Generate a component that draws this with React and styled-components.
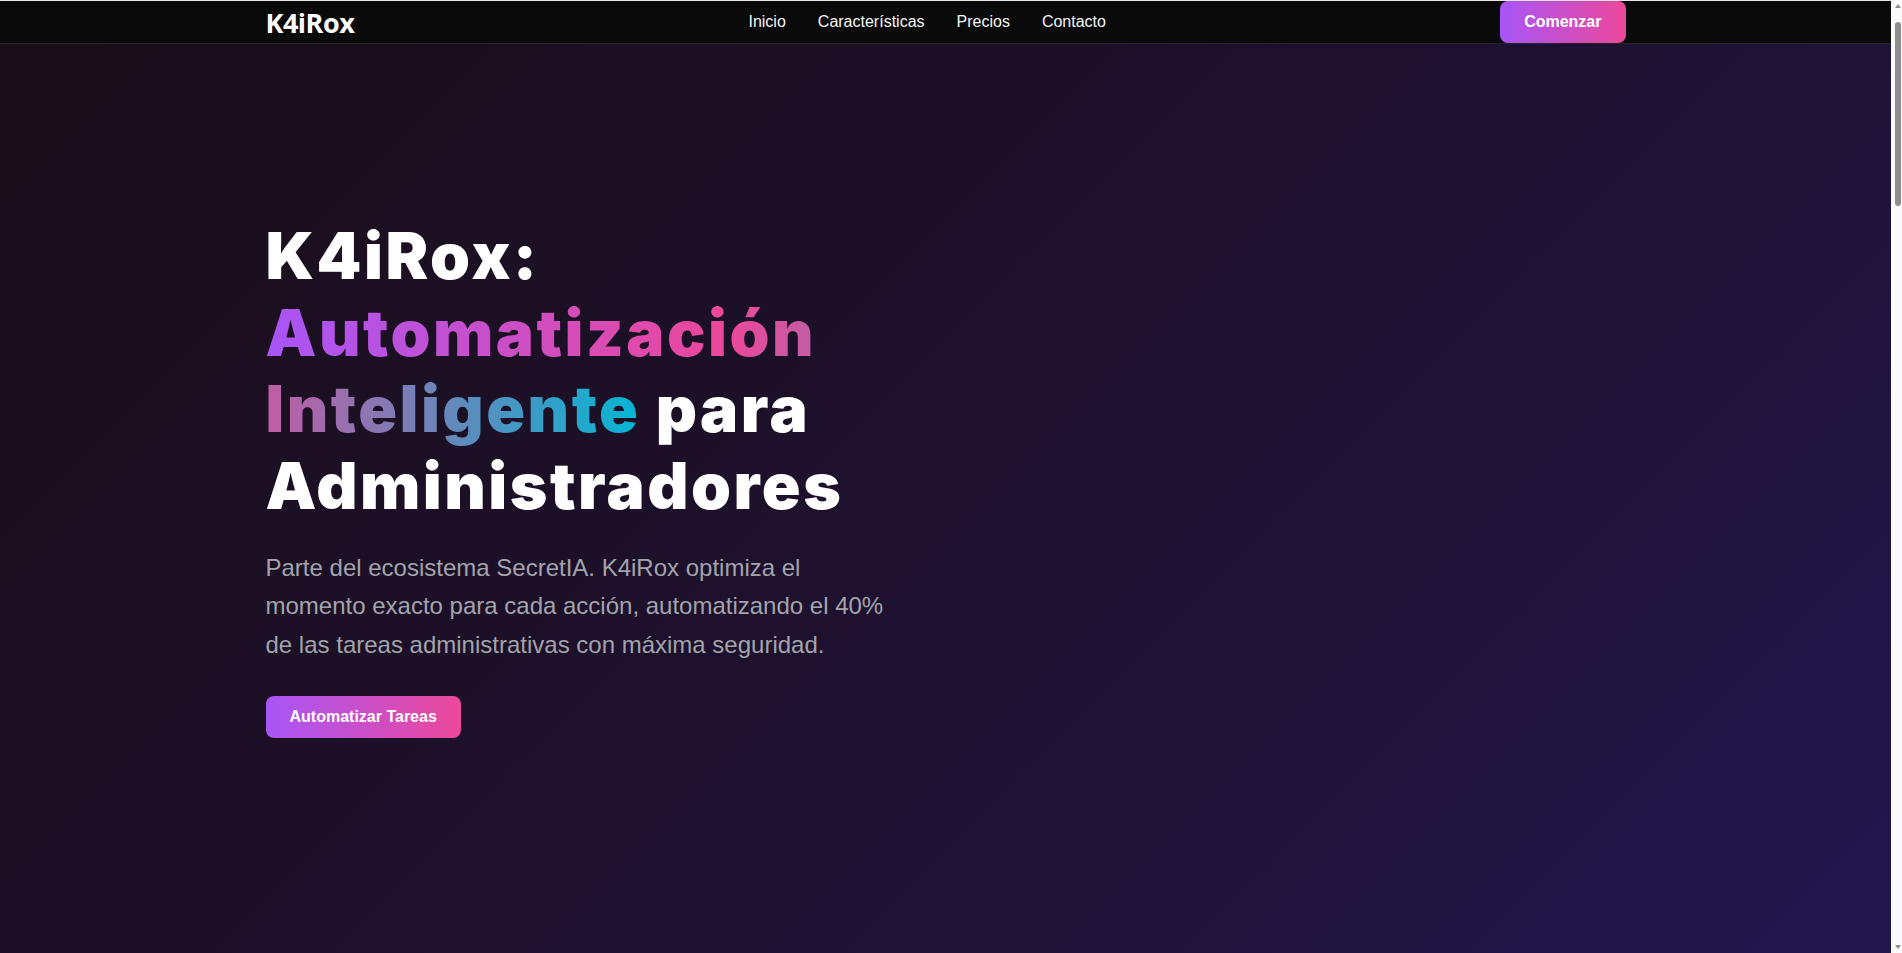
import React from "react";
import styled, { createGlobalStyle } from "styled-components";

const SCROLLBAR = 11;

const GlobalStyle = createGlobalStyle`
  *, *::before, *::after { box-sizing: border-box; }
  html, body { margin: 0; padding: 0; }
  html { background: #fafafa; }
  body {
    margin-right: ${SCROLLBAR}px;
    background: #0a0a0a;
    color: #ffffff;
    font-family: "Liberation Sans", Arial, sans-serif;
  }
`;

const Nav = styled.header`
  position: fixed;
  top: 0;
  left: 0;
  right: ${SCROLLBAR}px;
  z-index: 10;
  background: #0a0a0a;
  border-top: 1px solid #e6e6e6;
  border-bottom: 1px solid #242424;
`;

const Container = styled.div`
  width: 100%;
  max-width: 1400px;
  margin: 0 auto;
  padding: 0 20px;
`;

const NavBar = styled(Container)`
  display: flex;
  align-items: center;
  justify-content: space-between;
`;

const Logo = styled.a`
  font-family: "Open Sans", "Noto Sans", sans-serif;
  font-weight: 700;
  font-size: 27px;
  letter-spacing: -0.5px;
  color: #ffffff;
  text-decoration: none;
  line-height: 1;
`;

const Links = styled.nav`
  display: flex;
  gap: 32px;
`;

const NavLink = styled.a`
  font-family: "Liberation Sans", Arial, sans-serif;
  font-size: 16px;
  color: #f5f5f5;
  text-decoration: none;
`;

const GradientButton = styled.a`
  display: inline-block;
  padding: 12px 24px;
  border-radius: 8px;
  background: linear-gradient(90deg, #a855f7 0%, #ec4899 100%);
  color: #ffffff;
  font-family: "Liberation Sans", Arial, sans-serif;
  font-weight: 700;
  font-size: 16px;
  line-height: 18px;
  text-decoration: none;
  white-space: nowrap;
`;

const Hero = styled.section`
  min-height: 100vh;
  display: flex;
  align-items: center;
  padding-top: 3px;
  background: linear-gradient(135deg, #1a0f17 0%, #1c1029 40%, #1f1338 70%, #22164f 100%);
`;

const HeroContent = styled.div`
  max-width: 630px;
`;

const Title = styled.h1`
  margin: 0 0 24px;
  font-family: "Inter", "Liberation Sans", sans-serif;
  font-weight: 900;
  font-size: 64px;
  line-height: 1.2;
  letter-spacing: 2.5px;
  color: #ffffff;
`;

const GradientText = styled.span`
  background: linear-gradient(90deg, #a855f7 0%, #ec4899 50%, #06b6d4 100%);
  -webkit-background-clip: text;
  background-clip: text;
  color: transparent;
`;

const Lead = styled.p`
  margin: 0 0 32px;
  font-family: "Liberation Sans", Arial, sans-serif;
  font-size: 24px;
  line-height: 1.6;
  color: #a3a3ab;
`;

const Section = styled.section`
  min-height: 100vh;
  padding: 120px 0;
  background: ${(p) => (p.$alt ? "#120b1f" : "#0d0814")};
`;

const SectionTitle = styled.h2`
  margin: 0 0 24px;
  font-family: "Inter", "Liberation Sans", sans-serif;
  font-weight: 800;
  font-size: 44px;
  color: #ffffff;
`;

const SectionText = styled.p`
  margin: 0;
  max-width: 720px;
  font-size: 20px;
  line-height: 1.6;
  color: #a3a3ab;
`;

const Footer = styled.footer`
  padding: 40px 0;
  background: #0a0a0a;
  border-top: 1px solid #242424;
  color: #71717a;
  font-size: 14px;
`;

/* Window scrollbar, drawn over the right edge */
const ScrollTrack = styled.div`
  position: fixed;
  top: 0;
  right: 0;
  bottom: 0;
  width: ${SCROLLBAR}px;
  z-index: 20;
  background: #fafafa;
`;

const ScrollThumb = styled.div`
  position: absolute;
  top: 22px;
  right: 1px;
  width: 6px;
  height: 184px;
  border-radius: 3px;
  background: #8e8e8e;
`;

const ScrollArrow = styled.div`
  position: absolute;
  right: 1px;
  width: 0;
  height: 0;
  border-left: 3px solid transparent;
  border-right: 3px solid transparent;
  ${(p) =>
    p.$down
      ? "bottom: 4px; border-top: 4px solid #8e8e8e;"
      : "top: 4px; border-bottom: 4px solid #8e8e8e;"}
`;

const sections = [
  { id: "caracteristicas", title: "Características", text: "Automatización de tareas repetitivas, programación inteligente y flujos de trabajo adaptados a cada administrador." },
  { id: "seguridad", title: "Seguridad", text: "Cifrado de extremo a extremo y control total de permisos para cada proceso automatizado." },
  { id: "precios", title: "Precios", text: "Planes flexibles que crecen con tu equipo administrativo." },
  { id: "contacto", title: "Contacto", text: "Escríbenos y te ayudaremos a automatizar tus tareas." },
];

export default function App() {
  return (
    <>
      <GlobalStyle />
      <Nav>
        <NavBar>
          <Logo href="#">K4iRox</Logo>
          <Links>
            <NavLink href="#">Inicio</NavLink>
            <NavLink href="#caracteristicas">Características</NavLink>
            <NavLink href="#precios">Precios</NavLink>
            <NavLink href="#contacto">Contacto</NavLink>
          </Links>
          <GradientButton href="#">Comenzar</GradientButton>
        </NavBar>
      </Nav>
      <main>
        <Hero>
          <Container>
            <HeroContent>
              <Title>
                K4iRox: <GradientText>Automatización Inteligente</GradientText> para Administradores
              </Title>
              <Lead>
                Parte del ecosistema SecretIA. K4iRox optimiza el momento exacto para cada acción,
                automatizando el 40% de las tareas administrativas con máxima seguridad.
              </Lead>
              <GradientButton href="#">Automatizar Tareas</GradientButton>
            </HeroContent>
          </Container>
        </Hero>
        {sections.map((s, i) => (
          <Section key={s.id} id={s.id} $alt={i % 2 === 0}>
            <Container>
              <SectionTitle>{s.title}</SectionTitle>
              <SectionText>{s.text}</SectionText>
            </Container>
          </Section>
        ))}
      </main>
      <Footer>
        <Container>© 2024 K4iRox · Parte del ecosistema SecretIA</Container>
      </Footer>
      <ScrollTrack aria-hidden="true">
        <ScrollArrow />
        <ScrollThumb />
        <ScrollArrow $down />
      </ScrollTrack>
    </>
  );
}
